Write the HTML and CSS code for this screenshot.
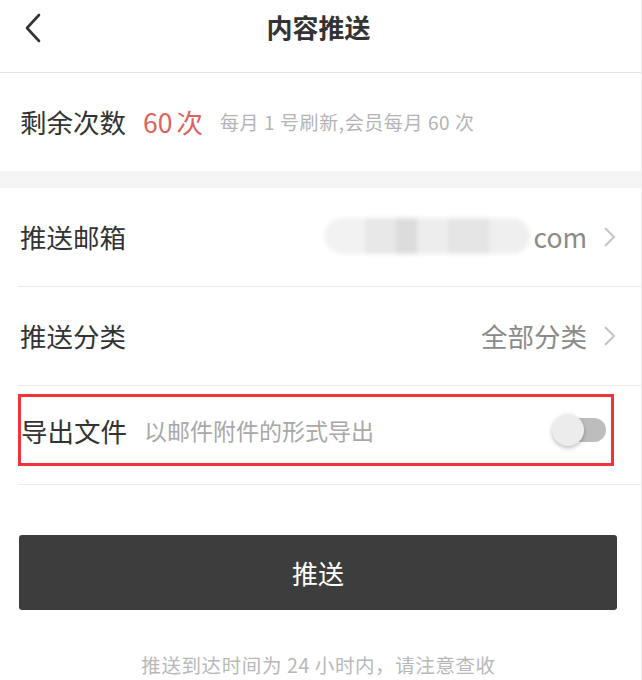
FILE: index.html
```html
<!DOCTYPE html>
<html lang="zh-CN">
<head>
  <meta charset="UTF-8">
  <meta name="viewport" content="width=device-width, initial-scale=1.0">
  <title>内容推送</title>
  <link rel="stylesheet" href="styles.css">
</head>
<body>
<div class="page">
  <!-- Header -->
  <div class="header">
    <svg class="back" width="20" height="30" viewBox="0 0 20 30">
      <path d="M15 2 L3 15 L15 28" fill="none" stroke="#333" stroke-width="2.6" stroke-linecap="round" stroke-linejoin="round"/>
    </svg>
    <h1>内容推送</h1>
  </div>

  <!-- Remaining count -->
  <div class="count-row">
    <span class="label">剩余次数</span>
    <span class="count"><span class="num">60</span>次</span>
    <span class="hint">每月 1 号刷新,会员每月 60 次</span>
  </div>

  <div class="gap"></div>

  <!-- Settings list -->
  <div class="list">
    <div class="row">
      <span class="label">推送邮箱</span>
      <span class="value">
        <span class="mask"></span>com
        <svg class="chevron" width="14" height="22" viewBox="0 0 14 22"><path d="M2 2 L11 11 L2 20" fill="none" stroke="#c4c4c4" stroke-width="2"/></svg>
      </span>
    </div>
    <div class="row">
      <span class="label">推送分类</span>
      <span class="value">全部分类
        <svg class="chevron" width="14" height="22" viewBox="0 0 14 22"><path d="M2 2 L11 11 L2 20" fill="none" stroke="#c4c4c4" stroke-width="2"/></svg>
      </span>
    </div>
    <div class="row row-top">
      <div class="export">
        <span class="label">导出文件</span>
        <span class="sub">以邮件附件的形式导出</span>
        <span class="switch"><span class="knob"></span></span>
      </div>
    </div>
  </div>

  <button class="push-btn">推送</button>

  <p class="note">推送到达时间为 24 小时内，请注意查收</p>
</div>
</body>
</html>
```

FILE: styles.css
```css
/* General reset */
* {
  margin: 0;
  padding: 0;
  box-sizing: border-box;
}

body {
  font-family: "Noto Sans CJK SC", "Noto Sans", sans-serif;
  background: #fff;
  color: #333;
}

.page {
  width: 642px;
  height: 680px;
  overflow: hidden;
  border-right: 1px solid #eee;
}

.header {
  height: 73px;
  border-bottom: 1px solid #e6e6e6;
  display: flex;
  align-items: center;
  justify-content: center;
  position: relative;
}

.header .back {
  position: absolute;
  left: 24px;
  top: 13px;
}

.header h1 {
  font-size: 26px;
  font-weight: bold;
  color: #333;
  margin: -19px 4px 0 0;
}

.label {
  font-size: 26.5px;
  color: #333;
}

.count-row {
  height: 98px;
  display: flex;
  align-items: center;
  padding: 0 20px 2px;
}

.count {
  font-size: 26.5px;
  color: #e0625c;
  margin-left: 17px;
}

.count .num {
  margin-right: 4px;
}

.hint {
  font-size: 19px;
  letter-spacing: 0.6px;
  color: #b4b4b4;
  margin-left: 17px;
}

.gap {
  height: 17px;
  background: #f5f5f5;
}

.list {
  padding-left: 18px;
}

.row {
  height: 99px;
  border-bottom: 1px solid #ebebeb;
  display: flex;
  align-items: center;
  justify-content: space-between;
  padding: 0 24px 2px 2px;
}

.row-top {
  align-items: flex-start;
}

.value {
  display: flex;
  align-items: center;
  font-size: 26.5px;
  color: #8a8a8a;
}

.value .chevron {
  margin-left: 16px;
  margin-top: 2px;
}

.mask {
  display: inline-block;
  width: 206px;
  height: 36px;
  border-radius: 18px;
  margin-right: 4px;
  background:
    linear-gradient(90deg, #f2f2f2 0 20%, #e8e8e8 20% 35%, #dcdcdc 35% 45%, #ededed 45% 60%, #e5e5e5 60% 80%, #efefef 80%);
  filter: blur(2px);
}

.export {
  margin: 8px -24px 0 -2px;
  width: 596px;
  height: 72px;
  border: 3px solid #f2343a;
  display: flex;
  align-items: center;
  padding: 0 5px 0 0;
}

.sub {
  font-size: 23px;
  color: #a8a8a8;
  margin-left: 17px;
}

.switch {
  margin-left: auto;
  width: 48px;
  height: 24px;
  background: #bdbdbd;
  border-radius: 12px;
  position: relative;
}

.knob {
  position: absolute;
  left: -6px;
  top: -4px;
  width: 32px;
  height: 32px;
  border-radius: 50%;
  background: #ececec;
  box-shadow: 0 2px 4px rgba(0, 0, 0, 0.25);
}

.push-btn {
  display: block;
  width: 598px;
  height: 75px;
  margin: 50px 0 0 19px;
  background: #3d3d3d;
  color: #fff;
  border: none;
  border-radius: 3px;
  font-family: inherit;
  font-size: 26px;
}

.note {
  text-align: center;
  font-size: 19.5px;
  letter-spacing: 0.6px;
  color: #b8b8b8;
  margin-top: 40px;
  padding-right: 4px;
}
```
